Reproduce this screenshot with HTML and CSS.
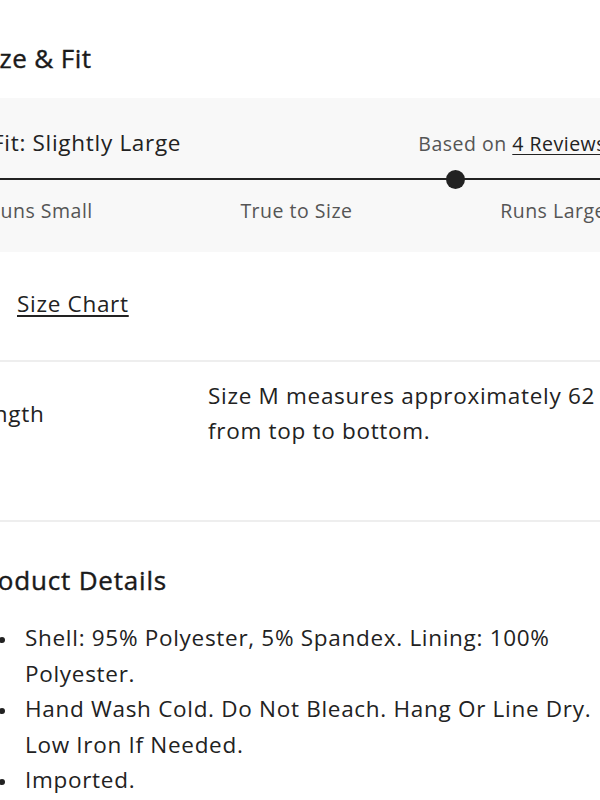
FILE: index.html
```html
<!DOCTYPE html>
<html>
<head>
<meta charset="utf-8">
<link rel="stylesheet" href="styles.css">
</head>
<body>
<div class="page">
  <h2 class="section-title">Size &amp; Fit</h2>
  <div class="fit-panel">
    <div class="fit-head">
      <span class="fit-verdict">Fit: Slightly Large</span>
      <span class="fit-based">Based on <a class="link" href="#">4 Reviews</a></span>
    </div>
    <div class="fit-track"><span class="fit-dot"></span></div>
    <div class="fit-labels">
      <span>Runs Small</span>
      <span>True to Size</span>
      <span>Runs Large</span>
    </div>
  </div>
  <div class="chart-row"><a class="link" href="#">Size Chart</a></div>
  <div class="measure-row">
    <div class="measure-name">Length</div>
    <div class="measure-text">Size M measures approximately 62 cm from top to bottom.</div>
  </div>
  <h2 class="section-title details-title">Product Details</h2>
  <ul class="details">
    <li>Shell: 95% Polyester, 5% Spandex. Lining: 100% Polyester.</li>
    <li>Hand Wash Cold. Do Not Bleach. Hang Or Line Dry. Low Iron If Needed.</li>
    <li>Imported.</li>
  </ul>
</div>
</body>
</html>
```
FILE: styles.css
```css
html, body {
  margin: 0;
  padding: 0;
  background: #fff;
  overflow: hidden;
}
body {
  font-family: "Open Sans", "Noto Sans", sans-serif;
  color: #222;
  width: 600px;
  height: 800px;
  letter-spacing: 0.7px;
}
.page {
  margin-left: -22px;
  width: 650px;
}
.section-title {
  margin: 0;
  font-size: 26px;
  font-weight: 500;
  -webkit-text-stroke: 0.4px #1a1a1a;
  line-height: 30px;
  letter-spacing: 0.4px;
  padding-top: 43px;
  padding-bottom: 25px;
  color: #1a1a1a;
}
.fit-panel {
  background: #f8f8f8;
  height: 154px;
  box-sizing: border-box;
  padding: 30px 22px 0 14px;
}
.fit-head {
  display: flex;
  justify-content: space-between;
  align-items: baseline;
  height: 30px;
}
.fit-verdict {
  font-size: 22.5px;
  line-height: 30px;
  color: #222;
}
.fit-based {
  font-size: 19.5px;
  letter-spacing: 0.5px;
  color: #555;
  white-space: nowrap;
}
.fit-based .link { color: #222; }
.link {
  color: #222;
  text-decoration: underline;
  text-underline-offset: 3px;
}
.fit-track {
  margin-top: 20px;
  margin-left: -14px;
  margin-right: -22px;
  height: 2px;
  background: #222;
  display: flex;
  align-items: center;
}
.fit-dot {
  width: 19px;
  height: 19px;
  border-radius: 50%;
  background: #222;
  margin-left: 468px;
}
.fit-labels {
  display: flex;
  justify-content: space-between;
  margin-top: 19px;
  margin-left: -4px;
  font-size: 19.5px;
  letter-spacing: 0.5px;
  line-height: 24px;
  color: #555;
}
.chart-row {
  height: 110px;
  box-sizing: border-box;
  padding: 37px 0 0 39px;
  font-size: 22.5px;
  line-height: 30px;
  border-bottom: 2px solid #eee;
}
.measure-row {
  display: flex;
  align-items: center;
  height: 160px;
  box-sizing: border-box;
  padding: 16px 0 72px;
  border-bottom: 2px solid #eee;
  font-size: 22.5px;
  line-height: 35px;
}
.measure-name {
  flex: none;
  width: 230px;
  margin-left: -10px;
  margin-right: 10px;
}
.measure-text {
  flex: none;
  width: 455px;
}
.details-title {
  padding-top: 43px;
  padding-bottom: 25px;
  margin-left: -8px;
  letter-spacing: 0.8px;
}
.details {
  margin: 0;
  padding-left: 47px;
  font-size: 22.5px;
  line-height: 35.5px;
  width: 590px;
  list-style: none;
}
.details li::before {
  content: "";
  display: inline-block;
  width: 6px;
  height: 6px;
  border-radius: 50%;
  background: #222;
  margin-left: -26px;
  margin-right: 20px;
  vertical-align: middle;
}
```
